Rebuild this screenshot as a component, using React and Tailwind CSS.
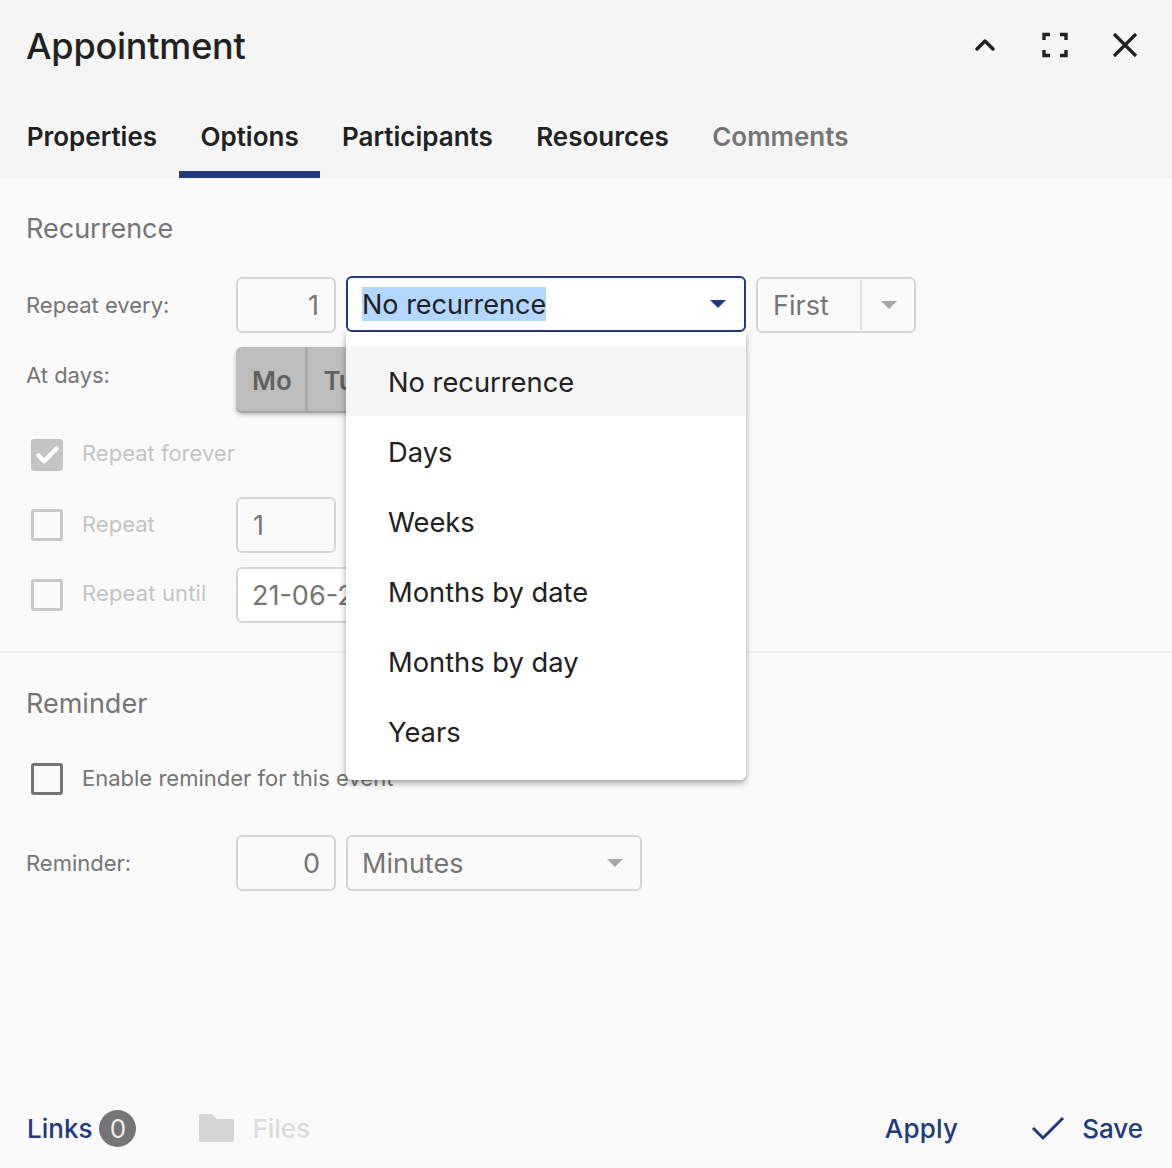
import { ChevronUp, Check } from 'lucide-react';

const OPTIONS = ['No recurrence', 'Days', 'Weeks', 'Months by date', 'Months by day', 'Years'];
const TABS = ['Properties', 'Options', 'Participants', 'Resources', 'Comments'];

function Caret({ color = 'border-t-[#a8a8a8]' }) {
  return <span className={`w-0 h-0 border-x-[8px] border-x-transparent border-t-[8px] ${color}`} />;
}

function Box({ checked, dark }) {
  if (checked) {
    return (
      <span className="w-8 h-8 ml-[5px] rounded-[3px] bg-[#c4c4c4] flex items-center justify-center shrink-0">
        <Check size={27} strokeWidth={4} className="text-white" />
      </span>
    );
  }
  return (
    <span className={`w-8 h-8 ml-[5px] rounded-[3px] border-[3px] shrink-0 ${dark ? 'border-[#757575]' : 'border-[#c8c8c8]'}`} />
  );
}

function Field({ className, children }) {
  return (
    <div className={`h-14 flex items-center border-2 border-[#d6d6d6] rounded-[6px] pt-[2px] text-[27px] text-[#757575] ${className}`}>
      {children}
    </div>
  );
}

export default function App() {
  return (
    <div className="w-[1172px] h-[1168px] flex flex-col bg-[#fafafa] font-['Inter','Liberation_Sans',sans-serif] overflow-hidden">
      {/* header */}
      <header className="h-[178px] shrink-0 bg-[#f5f5f5] flex flex-col">
        <div className="h-[92px] flex items-center justify-between pl-[26px] pr-[34px]">
          <h1 className="text-[36px] tracking-[-0.2px] font-medium text-[#212121] leading-none">Appointment</h1>
          <div className="flex items-center gap-[38px] text-[#212121] -mt-[3px]">
            <ChevronUp size={32} strokeWidth={2.6} />
            <svg width="32" height="32" viewBox="0 0 32 32" fill="none" stroke="currentColor" strokeWidth="3.4">
              <path d="M5 11V5.5h6M21 5.500h6V11M5 21v5.500h6M21 26.500h6V21" />
            </svg>
            <svg className="ml-[3px]" width="26" height="26" viewBox="0 0 26 26" fill="none" stroke="currentColor" strokeWidth="3.200">
              <path d="M2 2l22 22M24 2L2 24" />
            </svg>
          </div>
        </div>
        <nav className="flex-1 flex pl-[5px]">
          {TABS.map((t) => (
            <div
              key={t}
              className={`px-[21.7px] pt-[28px] text-[26px] leading-[34px] font-semibold border-b-[7px] ${
                t === 'Options' ? 'border-[#203a80]' : 'border-transparent'
              } ${t === 'Comments' ? 'text-[#757575]' : 'text-[#212121]'}`}
            >
              {t}
            </div>
          ))}
        </nav>
      </header>

      <main className="relative flex-1 flex flex-col">
        {/* recurrence */}
        <section className="px-[26px] h-[475px] shrink-0 border-b-2 border-[#eeeeee]">
          <h2 className="pt-[33px] text-[27px] leading-[36px] text-[#757575]">Recurrence</h2>
          <div className="mt-[30px] flex items-center">
            <span className="w-[210px] text-[22px] text-[#757575]">Repeat every:</span>
            <Field className="w-[100px] justify-end pr-[15px]">1</Field>
            <div className="w-[400px] ml-[10px] h-14" />
            <Field className="w-[160px] ml-[10px] pl-[15px]">
              <span className="flex-1">First</span>
              <span className="w-[54px] h-full -mt-[2px] pl-[2px] border-l-2 border-[#e2e2e2] flex items-center justify-center">
                <Caret />
              </span>
            </Field>
          </div>
          <div className="mt-[14px] flex items-center">
            <span className="w-[210px] -mt-[10px] text-[22px] text-[#757575]">At days:</span>
            <div className="flex h-[66px] w-[200px] rounded-[6px] bg-[#bdbdbd] border-b-2 border-[#a3a3a3] shadow-[0_2px_4px_rgba(0,0,0,0.25)] overflow-hidden text-[26px] font-semibold text-[#616161]">
              <span className="w-[72px] pl-[3px] pt-[3px] flex items-center justify-center border-r-[3px] border-[#a9a9a9]">Mo</span>
              <span className="w-[70px] pr-[5px] pt-[3px] flex items-center justify-center border-r-[3px] border-[#a9a9a9]">Tu</span>
            </div>
          </div>
          <div className="mt-[26px] h-8 flex items-center gap-[19px] text-[22px] text-[#c4c4c4]">
            <Box checked />
            <span className="-mt-[3px]">Repeat forever</span>
          </div>
          <div className="mt-[26px] flex items-center text-[22px] text-[#c4c4c4]">
            <div className="w-[210px] flex items-center gap-[19px]">
              <Box />
              <span className="-mt-[2px]">Repeat</span>
            </div>
            <Field className="w-[100px] pl-[15px]">1</Field>
          </div>
          <div className="mt-[14px] flex items-center text-[22px] text-[#c4c4c4]">
            <div className="w-[210px] flex items-center gap-[19px]">
              <Box />
              <span className="-mt-[3px] tracking-[0.15px]">Repeat until</span>
            </div>
            <Field className="w-[200px] pl-[14px] bg-white whitespace-nowrap overflow-hidden">21-06-2021</Field>
          </div>
        </section>

        {/* reminder */}
        <section className="px-[26px]">
          <h2 className="pt-[33px] text-[27px] leading-[36px] text-[#757575]">Reminder</h2>
          <div className="mt-[41px] h-8 flex items-center gap-[19px] text-[22px] text-[#757575]">
            <Box dark />
            <span className="-mt-[2px]">Enable reminder for this event</span>
          </div>
          <div className="mt-[40px] flex items-center">
            <span className="w-[210px] text-[22px] text-[#757575]">Reminder:</span>
            <Field className="w-[100px] justify-end pr-[14px]">0</Field>
            <Field className="w-[296px] ml-[10px] pl-[14px] pr-[17px] justify-between bg-[#fafafa]">
              Minutes
              <span className="flex -mt-[2px]"><Caret /></span>
            </Field>
          </div>
        </section>

        {/* open select with its menu */}
        <div className="absolute left-[346px] top-[98px] w-[400px]">
          <div className="h-14 flex items-center justify-between pl-[14px] pr-[18px] bg-white border-2 border-[#203a80] rounded-[6px] text-[27px] text-[#212121]">
            <span className="bg-[#b3d7ff] leading-[32px] pt-[2px]">No recurrence</span>
            <Caret color="border-t-[#203a80]" />
          </div>
          <ul className="bg-white rounded-b-[6px] pt-[14px] pb-[14px] shadow-[0_3px_6px_rgba(0,0,0,0.35)]">
            {OPTIONS.map((o, i) => (
              <li
                key={o}
                className={`h-[70px] flex items-center pl-[42px] pt-[4px] text-[27.3px] text-[#212121] ${i === 0 ? 'bg-[#f5f5f5]' : ''}`}
              >
                {o}
              </li>
            ))}
          </ul>
        </div>

        {/* footer */}
        <footer className="mt-auto h-[80px] flex items-center pl-[27px] pr-[29px] text-[26px] font-medium">
          <span className="text-[#203a80]">Links</span>
          <span className="ml-[7px] w-[37px] h-[37px] rounded-full bg-[#757575] text-[#eeeeee] font-normal flex items-center justify-center">0</span>
          <svg className="ml-[62px]" width="38" height="30" viewBox="0 0 38 30" fill="#d6d6d6">
            <path d="M3 1h11l5 5h15a2 2 0 0 1 2 2v19a2 2 0 0 1-2 2H3a2 2 0 0 1-2-2V3a2 2 0 0 1 2-2z" />
          </svg>
          <span className="ml-[16px] text-[#dcdcdc]">Files</span>
          <span className="ml-auto tracking-[0.2px] text-[#203a80]">Apply</span>
          <svg className="ml-[73px]" width="34" height="26" viewBox="0 0 34 26" fill="none" stroke="#203a80" strokeWidth="3">
            <path d="M2 13l10 10L32 3" />
          </svg>
          <span className="ml-[17px] text-[#203a80]">Save</span>
        </footer>
      </main>
    </div>
  );
}
